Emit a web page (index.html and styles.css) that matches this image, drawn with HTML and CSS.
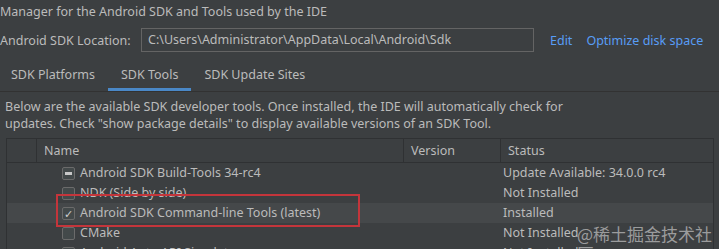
FILE: index.html
```html
<!DOCTYPE html>
<html lang="en">
<head>
  <meta charset="UTF-8">
  <title>Android SDK</title>
  <link rel="stylesheet" href="styles.css">
</head>
<body>

  <p class="intro">Manager for the Android SDK and Tools used by the IDE</p>

  <div class="location">
    <span class="label">Android SDK Location:</span>
    <div class="path">C:\Users\Administrator\AppData\Local\Android\Sdk</div>
    <a class="link edit">Edit</a>
    <a class="link">Optimize disk space</a>
  </div>

  <div class="tabs">
    <span class="tab">SDK Platforms</span>
    <span class="tab active">SDK Tools</span>
    <span class="tab">SDK Update Sites</span>
  </div>

  <p class="desc">Below are the available SDK developer tools. Once installed, the IDE will automatically check for<br>updates. Check "show package details" to display available versions of an SDK Tool.</p>

  <div class="tools">
    <div class="row head">
      <div class="cell"></div>
      <div class="cell">Name</div>
      <div class="cell version">Version</div>
      <div class="cell status">Status</div>
    </div>
    <div class="row">
      <div class="cell"></div>
      <div class="cell name"><span class="box partial"></span>Android SDK Build-Tools 34-rc4</div>
      <div class="cell"></div>
      <div class="cell status">Update Available: 34.0.0 rc4</div>
    </div>
    <div class="row">
      <div class="cell"></div>
      <div class="cell name"><span class="box"></span>NDK (Side by side)</div>
      <div class="cell"></div>
      <div class="cell status">Not Installed</div>
    </div>
    <div class="row hover">
      <div class="cell"></div>
      <div class="cell name"><span class="box checked">&#10003;</span>Android SDK Command-line Tools (latest)</div>
      <div class="cell"></div>
      <div class="cell status">Installed</div>
    </div>
    <div class="row">
      <div class="cell"></div>
      <div class="cell name"><span class="box"></span>CMake</div>
      <div class="cell"></div>
      <div class="cell status">Not Installed</div>
    </div>
    <div class="row">
      <div class="cell"></div>
      <div class="cell name"><span class="box"></span>Android Auto API Simulators</div>
      <div class="cell"></div>
      <div class="cell status">Not Installed</div>
    </div>

    <!-- annotation drawn over the screenshot -->
    <div class="mark"></div>
  </div>

  <div class="watermark">@稀土掘金技术社区</div>

</body>
</html>
```

FILE: styles.css
```css
body {
  margin: 0;
  background-color: #3c3f41;
  color: #bbbbbb;
  font-family: 'Noto Sans', sans-serif;
  font-size: 12.5px;
  overflow: hidden;
  height: 249px;
  position: relative;
}

.intro {
  margin: 0;
  padding: 3px 0 0 0;
  line-height: 18px;
}

.location {
  display: flex;
  align-items: center;
  margin-top: 7px;
  height: 24px;
}

.label {
  width: 141px;
}

.path {
  width: 385px;
  height: 22px;
  line-height: 22px;
  padding-left: 6px;
  border: 1px solid #646464;
  background-color: #3c3f41;
}

.link {
  color: #589df6;
  margin-left: 14px;
}

.link.edit {
  margin-left: 16px;
}

.tabs {
  display: flex;
  margin-top: 9px;
  margin-left: -2px;
  height: 30px;
  border-bottom: 1px solid #323232;
}

.tab {
  padding: 0 13px;
  line-height: 28px;
  border-bottom: 3px solid transparent;
}

.tab.active {
  border-bottom-color: #4a88c7;
}

.desc {
  margin: 6px 0 0 5px;
  line-height: 17px;
}

.tools {
  position: relative;
  margin: 6px 0 0 6px;
  width: 706px;
  border-top: 1px solid #2f3133;
  border-left: 1px solid #2f3133;
  border-right: 1px solid #2f3133;
}

.row {
  display: grid;
  grid-template-columns: 29px 367px 97px 1fr;
  height: 20px;
  line-height: 20px;
}

.row.head {
  height: 23px;
  line-height: 23px;
  border-bottom: 1px solid #2f3133;
}

.row.head .cell + .cell {
  border-left: 1px solid #2f3133;
  padding-left: 7px;
}

.row.hover {
  background-color: #45484a;
}

.cell {
  white-space: nowrap;
}

.status {
  padding-left: 3px;
}

.name {
  display: flex;
  align-items: center;
  padding-left: 26px;
}

.box {
  width: 11px;
  height: 11px;
  margin-right: 5px;
  border: 1px solid #6b6b6b;
  border-radius: 2px;
  background-color: #43494a;
  color: #d0d0d0;
  font-size: 11px;
  line-height: 11px;
  text-align: center;
  position: relative;
}

.box.partial::after {
  content: '';
  position: absolute;
  left: 2px;
  right: 2px;
  top: 4px;
  height: 3px;
  background-color: #c8c8c8;
}

.mark {
  position: absolute;
  left: 49px;
  top: 55px;
  width: 300px;
  height: 29px;
  border: 2px solid #c4353b;
}

.watermark {
  position: absolute;
  left: 577px;
  top: 224px;
  font-family: 'Noto Sans CJK SC', sans-serif;
  font-size: 17px;
  line-height: 20px;
  color: rgba(220, 220, 220, 0.6);
}
```
